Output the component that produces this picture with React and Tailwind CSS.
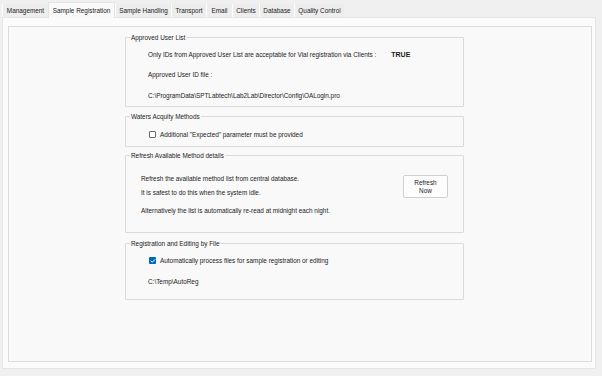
import { Check } from 'lucide-react';

const tabs = [
  { label: 'Management', w: 'w-[46px]' },
  { label: 'Sample Registration', w: 'w-[67px]', active: true },
  { label: 'Sample Handling', w: 'w-[56px]' },
  { label: 'Transport', w: 'w-[35px]' },
  { label: 'Email', w: 'w-[26px]' },
  { label: 'Clients', w: 'w-[27px]' },
  { label: 'Database', w: 'w-[35px]' },
  { label: 'Quality Control', w: 'w-[50px]' },
];

function Group({ title, className, children }) {
  return (
    <div className={`border border-[#dadada] rounded-[1px] ${className}`}>
      <div className="-mt-[5px] ml-[4px] px-[1px] w-fit h-[9px] leading-[9px] bg-[#f9f9f9]">{title}</div>
      {children}
    </div>
  );
}

function Line({ className = '', children }) {
  return <div className={`h-[9px] leading-[9px] whitespace-nowrap ${className}`}>{children}</div>;
}

function CheckBox({ checked }) {
  if (checked) {
    return (
      <span className="w-[7px] h-[7px] rounded-[1px] bg-[#0067c0] flex items-center justify-center">
        <Check className="w-[6px] h-[6px] text-white" strokeWidth={4} />
      </span>
    );
  }
  return <span className="w-[7px] h-[7px] rounded-[1px] border border-[#6a6a6a] bg-white" />;
}

export default function App() {
  return (
    <div className="w-[602px] h-[376px] bg-[#f0f0f0] text-[6.4px] text-[#1b1b1b] font-['Liberation_Sans',Arial,sans-serif] overflow-hidden">

      {/* ── Tab strip ── */}
      <div className="h-[17px] pl-[2px] flex items-end">
        {tabs.map((t) =>
          t.active ? (
            <div key={t.label}
              className={`${t.w} h-[16px] -mb-[1px] relative z-10 bg-[#f9f9f9] border-x border-t border-[#e4e4e4] flex items-start justify-center pt-[4px] leading-[7px] whitespace-nowrap`}>
              {t.label}
            </div>
          ) : (
            <div key={t.label}
              className={`${t.w} h-[13px] bg-[#ededed] border-l border-white flex items-center justify-center leading-[7px] whitespace-nowrap`}>
              {t.label}
            </div>
          )
        )}
      </div>

      {/* ── Tab page ── */}
      <div className="ml-[2px] w-[594px] h-[352px] bg-[#fbfbfb] border border-[#e6e6e6] pt-[8px] pl-[5px]">
        <div className="w-[584px] h-[336px] bg-[#f9f9f9] border border-[#dcdcdc] pt-[10px] pl-[116px]">
          <div className="w-[339px] flex flex-col">

            <Group title="Approved User List" className="h-[70px]">
              <Line className="mt-[8px] ml-[22px] flex items-center">
                Only IDs from Approved User List are acceptable for Vial registration via Clients :
                <span className="ml-[15px] font-bold text-[7px]">TRUE</span>
              </Line>
              <Line className="mt-[11px] ml-[22px]">Approved User ID file :</Line>
              <Line className="mt-[12px] ml-[22px]">C:\ProgramData\SPTLabtech\Lab2Lab\Director\Config\OALogin.pro</Line>
            </Group>

            <Group title="Waters Acquity Methods" className="h-[31px] mt-[9px]">
              <Line className="mt-[9px] ml-[23px] flex items-center gap-[4px]">
                <CheckBox />
                <span>Additional "Expected" parameter must be provided</span>
              </Line>
            </Group>

            <Group title="Refresh Available Method details" className="h-[78px] mt-[8px]">
              <div className="flex items-start justify-between">
                <div className="ml-[15px]">
                  <Line className="mt-[14px]">Refresh the available method list from central database.</Line>
                  <Line className="mt-[5px]">It is safest to do this when the system idle.</Line>
                  <Line className="mt-[9px]">Alternatively the list is automatically re-read at midnight each night.</Line>
                </div>
                <button className="mt-[15px] mr-[15px] w-[45px] h-[23px] bg-[#fdfdfd] border border-[#d0d0d0] rounded-[2px] flex flex-col items-center justify-center leading-[8px] text-[#1b1b1b]">
                  <span>Refresh</span>
                  <span>Now</span>
                </button>
              </div>
            </Group>

            <Group title="Registration and Editing by File" className="h-[57px] mt-[10px]">
              <Line className="mt-[8px] ml-[23px] flex items-center gap-[4px]">
                <CheckBox checked />
                <span>Automatically process files for sample registration or editing</span>
              </Line>
              <Line className="mt-[12px] ml-[22px]">C:\Temp\AutoReg</Line>
            </Group>

          </div>
        </div>
      </div>
    </div>
  );
}
